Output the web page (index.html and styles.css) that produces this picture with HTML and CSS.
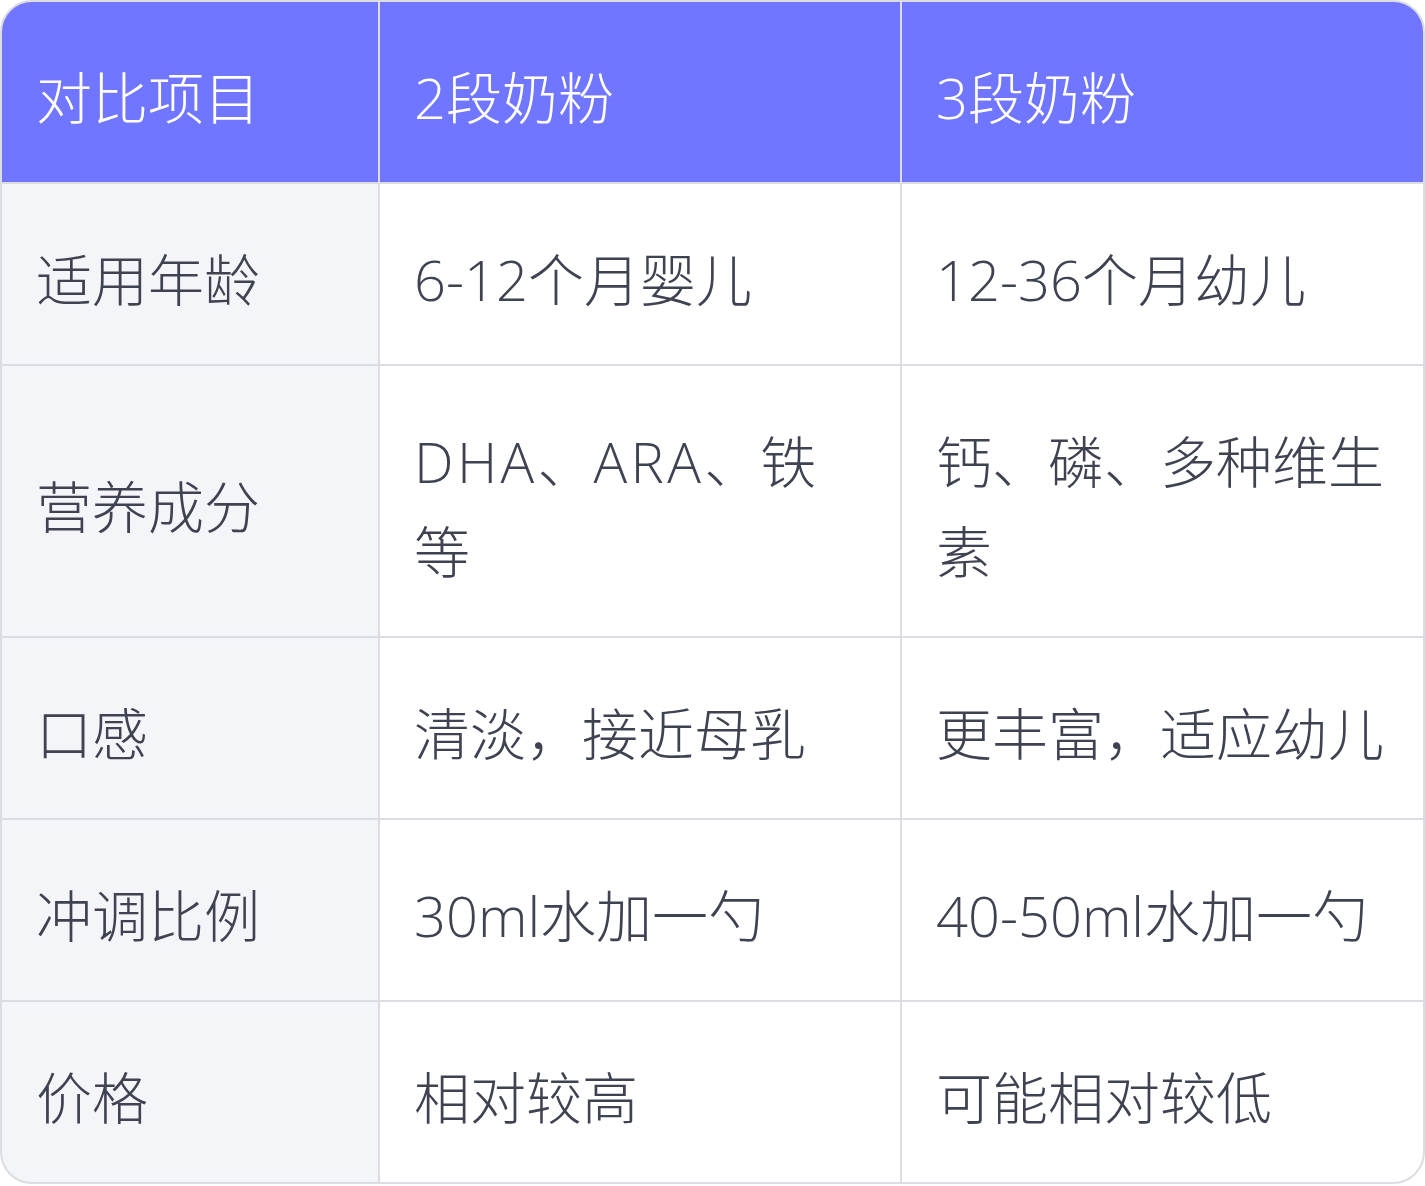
FILE: index.html
```html
<!DOCTYPE html>
<html lang="zh-CN">
<head>
<meta charset="utf-8">
<title>2段与3段奶粉对比</title>
<link rel="stylesheet" href="styles.css">
</head>
<body>
<div class="table">
  <div class="cell head">对比项目</div>
  <div class="cell head">2段奶粉</div>
  <div class="cell head">3段奶粉</div>

  <div class="cell label">适用年龄</div>
  <div class="cell">6-12个月婴儿</div>
  <div class="cell">12-36个月幼儿</div>

  <div class="cell label">营养成分</div>
  <div class="cell"><span class="txt"><abbr class="abbr">DHA</abbr>、<abbr class="abbr">ARA</abbr>、铁等</span></div>
  <div class="cell">钙、磷、多种维生素</div>

  <div class="cell label">口感</div>
  <div class="cell">清淡，接近母乳</div>
  <div class="cell">更丰富，适应幼儿</div>

  <div class="cell label">冲调比例</div>
  <div class="cell">30ml水加一勺</div>
  <div class="cell">40-50ml水加一勺</div>

  <div class="cell label">价格</div>
  <div class="cell">相对较高</div>
  <div class="cell">可能相对较低</div>
</div>
</body>
</html>
```

FILE: styles.css
```css
html, body {
  margin: 0;
  padding: 0;
  background: #ffffff;
}

.table {
  width: 1425px;
  box-sizing: border-box;
  display: grid;
  grid-template-columns: 376px 520px 1fr;
  gap: 2px;
  background: #dcdde2;
  border: 2px solid #dcdde2;
  border-radius: 32px;
  overflow: hidden;
  font-family: "Open Sans", "Noto Sans CJK SC", sans-serif;
  font-weight: 300;
  font-size: 56px;
  line-height: 90px;
  color: #3e4251;
}

.cell {
  background: #ffffff;
  padding: 50px 36px 40px 34px;
  display: flex;
  align-items: center;
}

.cell.head {
  background: #7076ff;
  color: #ffffff;
}

.cell.label {
  background: #f4f5f9;
}

.txt {
  display: block;
}

.abbr {
  text-decoration: none;
  letter-spacing: 0.06em;
}
```
